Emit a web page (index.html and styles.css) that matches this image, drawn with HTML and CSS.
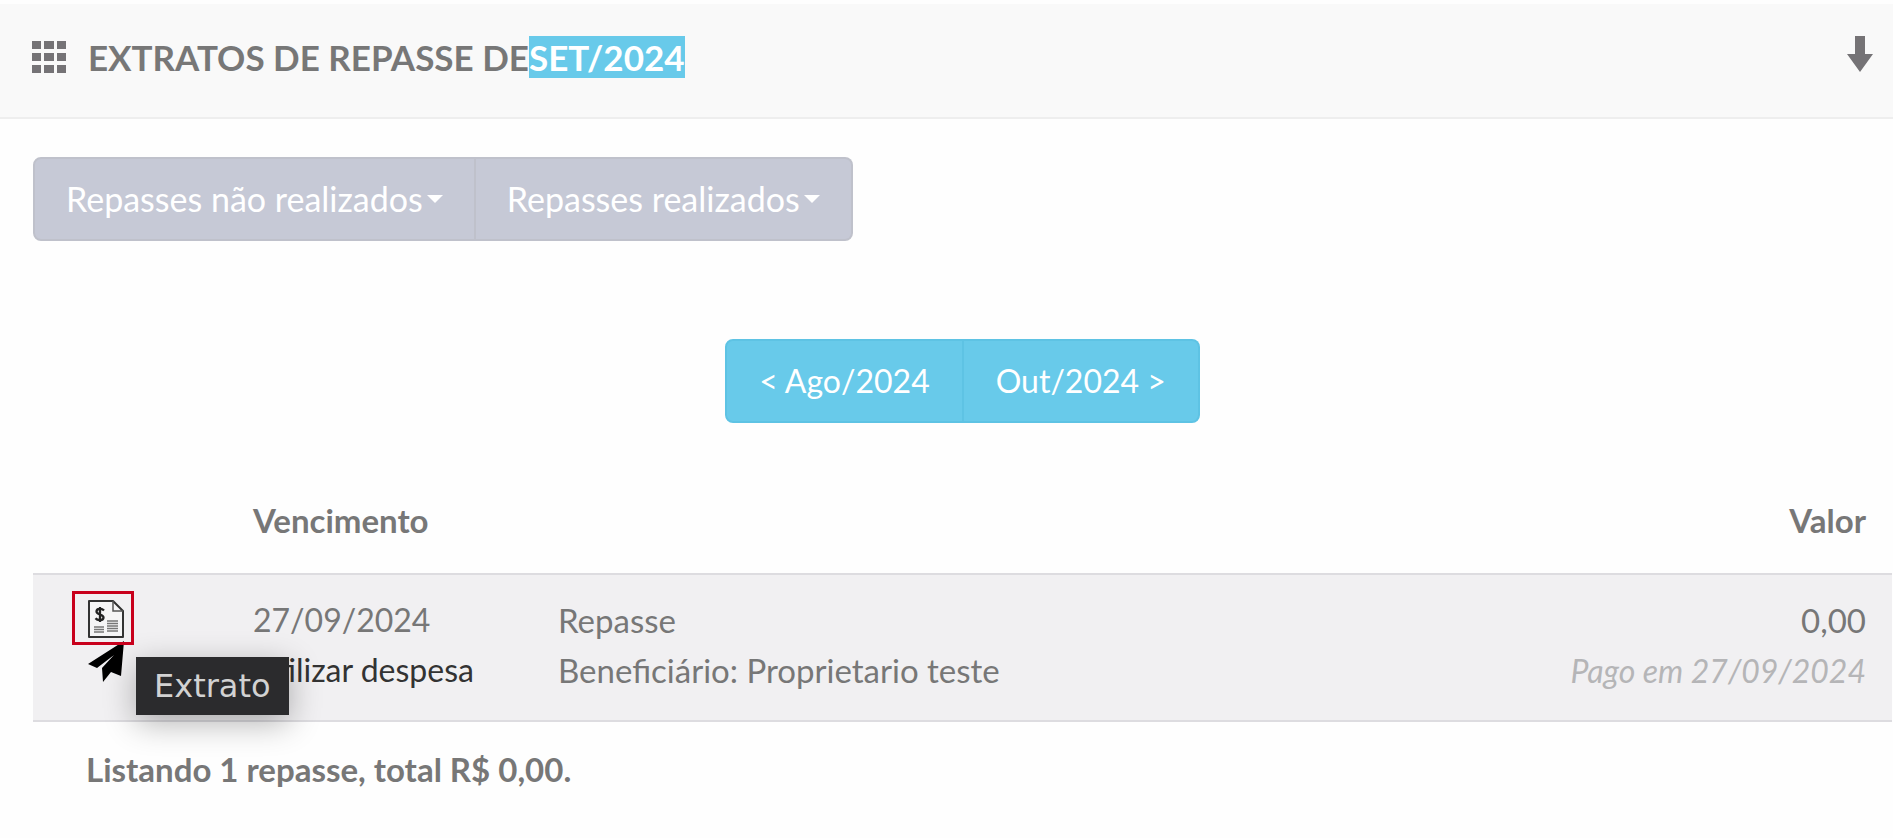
FILE: index.html
```
<!DOCTYPE html>
<html lang="pt-BR">
<head>
<meta charset="utf-8">
<meta name="viewport" content="width=device-width,initial-scale=1">
<title>Extratos de repasse</title>
<link rel="stylesheet" href="styles.css">
</head>
<body>

<header class="panel-heading">
  <svg class="icon-grid" viewBox="0 0 34 34" aria-hidden="true">
    <path d="M0 1h9v8H0zM12 1h10v8H12zM25 1h9v8h-9zM0 13h9v8H0zM12 13h10v8H12zM25 13h9v8h-9zM0 25h9v8H0zM12 25h10v8H12zM25 25h9v8h-9z"/>
  </svg>
  <h1>EXTRATOS DE REPASSE DE<mark>SET/2024</mark></h1>
  <button class="collapse" aria-label="Recolher">
    <svg viewBox="0 0 26 36" aria-hidden="true"><path d="M8 0h10v18h8L13 36 0 18h8z"/></svg>
  </button>
</header>

<main class="panel-body">
  <div class="btn-group filters">
    <button class="btn btn-muted">Repasses não realizados <span class="caret"></span></button>
    <button class="btn btn-muted">Repasses realizados <span class="caret"></span></button>
  </div>

  <nav class="btn-group pager">
    <a class="btn btn-info" href="#">&lt; Ago/2024</a>
    <a class="btn btn-info" href="#">Out/2024 &gt;</a>
  </nav>

  <table>
    <thead>
      <tr>
        <th class="col-actions"></th>
        <th class="col-date">Vencimento</th>
        <th></th>
        <th class="col-value">Valor</th>
      </tr>
    </thead>
    <tbody>
      <tr>
        <td class="col-actions">
          <div class="actions">
            <a class="action action-active" href="#" aria-label="Extrato">
              <svg viewBox="0 0 36 38" aria-hidden="true">
                <path d="M1 1h24l10 10v26H1z" fill="#f5f5f6" stroke="#333" stroke-width="2" stroke-linejoin="round"/>
                <path d="M25 1v10h10" fill="none" stroke="#555" stroke-width="1.5"/>
                <path d="M16 10.500C14 8.300 8.500 8.300 8.500 11.500c0 3.500 7 2.500 7 6 0 3.300-6 3.300-8 .8M12 7v15" fill="none" stroke="#222" stroke-width="2.300"/>
                <path d="M6 27h10M6 29.500h10M6 32h10M19 21h11M19 23.500h11M19 26h11M19 28.500h11M19 31h11" stroke="#777" stroke-width="1.300"/>
              </svg>
              <span class="tooltip">Extrato</span>
            </a>
            <a class="action" href="#" aria-label="Enviar">
              <svg viewBox="0 0 36 42" aria-hidden="true">
                <path d="M36 0 33 35l-10-4-8 10-1-14L26 14 9 27 0 23z" fill="#000"/>
              </svg>
            </a>
          </div>
        </td>
        <td class="col-date">27/09/2024<br><a class="expense" href="#">Utilizar despesa</a></td>
        <td>Repasse<br>Beneficiário: Proprietario teste</td>
        <td class="col-value">0,00<br><em>Pago em 27/09/2024</em></td>
      </tr>
    </tbody>
  </table>

  <p class="summary">Listando 1 repasse, total R$ 0,00.</p>
</main>

</body>
</html>
```
FILE: styles.css
```
:root{
  --text:#777;
  --info:#68caea;
  --muted:#c6c9d6;
  --line:#dddce0;
}
*{box-sizing:border-box}
body{
  margin:0;padding-top:4px;background:#fefefe;color:var(--text);
  font:33px/50px Lato,"Open Sans",sans-serif;
}
button{font:inherit;border:0;cursor:pointer}
a{text-decoration:none}
svg{display:block}

/* heading */
.panel-heading{
  display:flex;align-items:flex-start;height:115px;padding:32px 20px 0 32px;
  background:#f9f9f9;border-bottom:2px solid #eee;
}
.icon-grid{width:34px;height:34px;margin:4px 22px 0 0;fill:#757376}
h1{margin:0;font-size:35px;line-height:42px;font-weight:700}
mark{display:inline-block;background:var(--info);color:#fff}
.collapse{margin-left:auto;padding:0;background:none}
.collapse svg{width:26px;height:36px;fill:#757376}

.panel-body{padding:38px 1px 0 33px}

/* buttons */
.btn-group{display:flex;width:fit-content}
.btn{
  display:flex;align-items:center;justify-content:center;height:84px;
  color:#fff;border:2px solid;white-space:nowrap;
}
.btn:first-child{border-radius:8px 0 0 8px}
.btn:last-child{border-radius:0 8px 8px 0;border-left-width:0}
.btn-muted{padding:0 31px;font-size:34px;background:var(--muted);border-color:#bfc1cb}
.btn-info{padding:0 32px;font-size:32px;background:var(--info);border-color:#5ec3e4}
.caret{
  margin-left:4px;border:8px solid transparent;border-top-color:#fff;border-bottom:0;
}
.pager{margin:98px auto 72px}

/* table */
table{width:100%;border-collapse:collapse}
th,td{padding:20px 26px 24px;text-align:left;vertical-align:top}
th{padding:0 26px 28px}
td{background:#f1f0f2;border-top:2px solid var(--line);border-bottom:2px solid var(--line)}
.col-actions{width:194px;padding-left:55px}
.col-date{width:305px;white-space:nowrap}
td.col-date,.col-value em{font-size:32px}
.col-value{text-align:right}
.col-value em{color:#b5b5b7}
.expense{color:#333}

.actions{display:flex;flex-direction:column;gap:3px;padding-top:5px}
.action{position:relative;width:36px}
.action-active{z-index:1}
.action-active::after{
  content:"";position:absolute;inset:-9px -10px -7px -16px;border:3px solid #c8001c;
}
.tooltip{
  position:absolute;top:57px;left:48px;padding:0 18px;
  font:32px/58px "DejaVu Sans",sans-serif;color:#d2d2d2;background:#2b2b2d;
  box-shadow:0 8px 32px rgba(0,0,0,.3);
}

.summary{margin:22px 0 0 53px;font-weight:700}
```
